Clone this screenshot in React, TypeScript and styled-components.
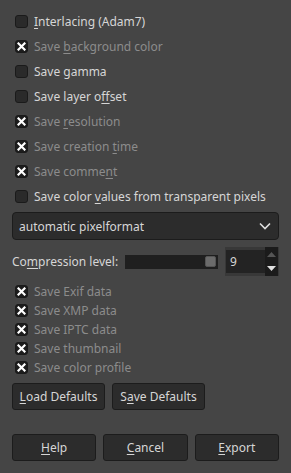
import React from "react";
import styled, { createGlobalStyle } from "styled-components";

const Global = createGlobalStyle`
  html, body { margin: 0; padding: 0; background: #454545; }
  body { font-family: "Noto Sans", "DejaVu Sans", sans-serif; font-size: 12px; color: #dcdcdc; }
  * { box-sizing: border-box; }
`;

const Page = styled.div`
  width: 291px;
  height: 473px;
  background: #454545;
  display: flex;
  flex-direction: column;
  padding: 9px 12px 0 12px;
`;

const CheckRow = styled.div<{ $h: number; $dim?: boolean }>`
  height: ${(p) => p.$h}px;
  display: flex;
  align-items: center;
  gap: 6px;
  padding-left: 3px;
  color: ${(p) => (p.$dim ? "#8c8c8c" : "#d6d6d6")};
  white-space: nowrap;
`;

const Box = styled.span<{ $checked?: boolean }>`
  width: 13px;
  height: 13px;
  border-radius: 3px;
  background: ${(p) => (p.$checked ? "#1c1c1c" : "#2a2a2a")};
  border: 1px solid #1a1a1a;
  display: flex;
  align-items: center;
  justify-content: center;
  flex: none;
`;

const U = styled.span`
  text-decoration: underline;
  text-underline-offset: 2px;
`;

const Cross = () => (
  <svg width="9" height="9" viewBox="0 0 9 9">
    <path d="M1.5 1.5 L7.5 7.5 M7.5 1.5 L1.5 7.5" stroke="#ffffff" strokeWidth="2.2" strokeLinecap="square" />
  </svg>
);

const Combo = styled.div`
  margin-top: 3px;
  height: 28px;
  border: 1px solid #1c1c1c;
  border-radius: 4px;
  background: #2c2c2c;
  display: flex;
  align-items: center;
  justify-content: space-between;
  padding: 0 7px 0 6px;
  color: #d6d6d6;
`;

const CompRow = styled.div`
  margin-top: 7px;
  height: 29px;
  display: flex;
  align-items: center;
`;

const Label = styled.span`
  color: #d6d6d6;
  width: 113px;
  flex: none;
  white-space: nowrap;
`;

const Track = styled.div`
  width: 93px;
  height: 14px;
  background: #1f1f1f;
  display: flex;
  justify-content: flex-end;
  align-items: center;
  padding-right: 2px;
  flex: none;
`;

const Knob = styled.div`
  width: 11px;
  height: 11px;
  border-radius: 2px;
  background: #6b6b6b;
  border: 1px solid #555;
`;

const Spin = styled.div`
  margin-left: 7px;
  width: 54px;
  height: 29px;
  background: #383838;
  display: flex;
  padding: 3px 1px 3px 1px;
`;

const SpinEntry = styled.div`
  flex: 1;
  background: #232323;
  display: flex;
  align-items: center;
  padding-left: 4px;
  color: #d6d6d6;
`;

const SpinBtns = styled.div`
  width: 13px;
  display: flex;
  flex-direction: column;
  margin: -3px 0;
  background: #1b1b1b;
`;

const SpinBtn = styled.div`
  flex: 1;
  display: flex;
  align-items: center;
  justify-content: center;
`;

const MetaList = styled.div`
  margin-top: 6px;
  display: flex;
  flex-direction: column;
`;

const BtnRow = styled.div<{ $mt: number }>`
  margin-top: ${(p) => p.$mt}px;
  display: flex;
  gap: 7px;
`;

const Button = styled.div<{ $w?: number }>`
  height: 27px;
  ${(p) => (p.$w ? `width: ${p.$w}px;` : "flex: 1;")}
  background: #2c2c2c;
  border: 1px solid #1c1c1c;
  border-radius: 3px;
  display: flex;
  align-items: center;
  justify-content: center;
  color: #d6d6d6;
  white-space: nowrap;
`;

type Item = { label: React.ReactNode; checked?: boolean; dim?: boolean };

const topItems: Item[] = [
  { label: <><U>I</U>nterlacing (Adam7)</> },
  { label: <>Save <U>b</U>ackground color</>, checked: true, dim: true },
  { label: <>Save gamma</> },
  { label: <>Save layer o<U>f</U>fset</> },
  { label: <>Save <U>r</U>esolution</>, checked: true, dim: true },
  { label: <>Save creation <U>t</U>ime</>, checked: true, dim: true },
  { label: <>Save comme<U>n</U>t</>, checked: true, dim: true },
  { label: <>Save color <U>v</U>alues from transparent pixels</> },
];

const metaItems = ["Save Exif data", "Save XMP data", "Save IPTC data", "Save thumbnail", "Save color profile"];

export default function App() {
  return (
    <>
      <Global />
      <Page>
        {topItems.map((it, i) => (
          <CheckRow key={i} $h={25} $dim={it.dim}>
            <Box $checked={it.checked}>{it.checked && <Cross />}</Box>
            <span>{it.label}</span>
          </CheckRow>
        ))}
        <Combo>
          <span>automatic pixelformat</span>
          <svg width="12" height="8" viewBox="0 0 12 8">
            <path d="M1 1.5 L6 6.5 L11 1.5" stroke="#e0e0e0" strokeWidth="1.6" fill="none" />
          </svg>
        </Combo>
        <CompRow>
          <Label>Co<U>m</U>pression level:</Label>
          <Track>
            <Knob />
          </Track>
          <Spin>
            <SpinEntry>9</SpinEntry>
            <SpinBtns>
              <SpinBtn>
                <svg width="9" height="5" viewBox="0 0 9 5"><path d="M0 5 L4.5 0 L9 5Z" fill="#555" /></svg>
              </SpinBtn>
              <SpinBtn>
                <svg width="9" height="5" viewBox="0 0 9 5"><path d="M0 0 L4.5 5 L9 0Z" fill="#e0e0e0" /></svg>
              </SpinBtn>
            </SpinBtns>
          </Spin>
        </CompRow>
        <MetaList>
          {metaItems.map((m) => (
            <CheckRow key={m} $h={19} $dim>
              <Box $checked><Cross /></Box>
              <span>{m}</span>
            </CheckRow>
          ))}
        </MetaList>
        <BtnRow $mt={6}>
          <Button $w={93}><span><U>L</U>oad Defaults</span></Button>
          <Button $w={93}><span>S<U>a</U>ve Defaults</span></Button>
        </BtnRow>
        <BtnRow $mt={24}>
          <Button><span><U>H</U>elp</span></Button>
          <Button><span><U>C</U>ancel</span></Button>
          <Button><span><U>E</U>xport</span></Button>
        </BtnRow>
      </Page>
    </>
  );
}
